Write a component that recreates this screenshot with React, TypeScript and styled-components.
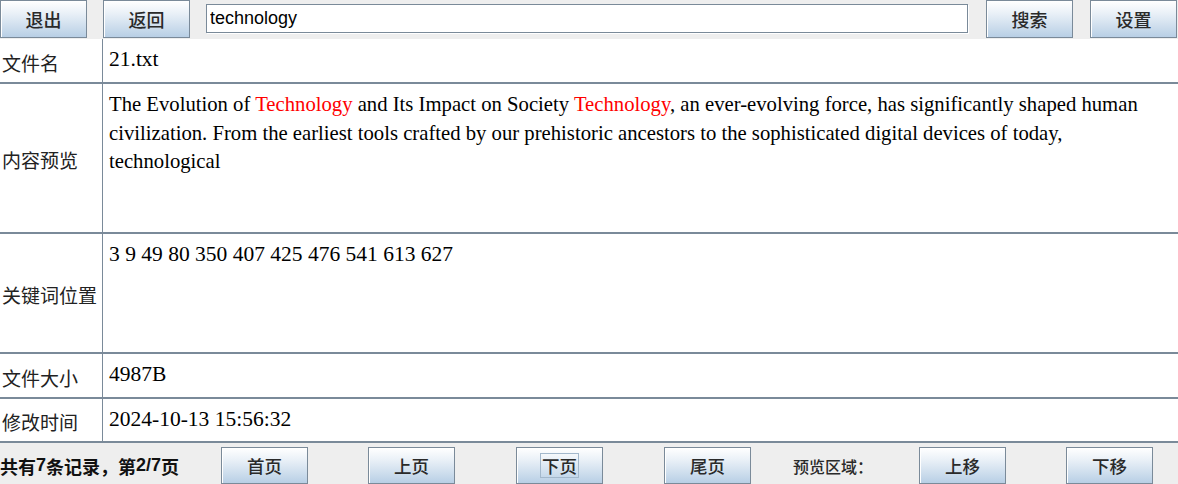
import styled, { createGlobalStyle } from 'styled-components';

const GlobalStyle = createGlobalStyle`
  html, body {
    margin: 0;
    padding: 0;
    background: #ffffff;
    overflow: hidden;
  }
`;

interface InfoRow {
  label: string;
  height: number;
  tight?: boolean;
  content: React.ReactNode;
}

const Hit = styled.span`
  color: #ff0000;
`;

const rows: InfoRow[] = [
  { label: '文件名', height: 45, content: '21.txt' },
  {
    label: '内容预览',
    height: 150,
    tight: true,
    content: (
      <>
        The Evolution of <Hit>Technology</Hit> and Its Impact on Society{' '}
        <Hit>Technology</Hit>, an ever-evolving force, has significantly shaped
        human civilization. From the earliest tools crafted by our prehistoric
        ancestors to the sophisticated digital devices of today, technological
      </>
    ),
  },
  {
    label: '关键词位置',
    height: 120,
    content: '3 9 49 80 350 407 425 476 541 613 627',
  },
  { label: '文件大小', height: 45, content: '4987B' },
  { label: '修改时间', height: 44, content: '2024-10-13 15:56:32' },
];

export default function App() {
  return (
    <>
      <GlobalStyle />
      <Window>
        <Toolbar>
          <ToolButton>退出</ToolButton>
          <ToolButton>返回</ToolButton>
          <SearchField defaultValue="technology" />
          <ToolButton $left={18}>搜索</ToolButton>
          <ToolButton $left={17}>设置</ToolButton>
        </Toolbar>
        <Table>
          {rows.map((row) => (
            <Row key={row.label} $height={row.height}>
              <Label>{row.label}</Label>
              <Value $tight={row.tight}>{row.content}</Value>
            </Row>
          ))}
        </Table>
        <StatusBar>
          <Status>
            共有<b>7</b>条记录，第<b>2/7</b>页
          </Status>
          <PageButton $left={39}>首页</PageButton>
          <PageButton $left={60}>上页</PageButton>
          <PageButton $left={61}>
            <Focus>下页</Focus>
          </PageButton>
          <PageButton $left={61}>尾页</PageButton>
          <AreaLabel>预览区域：</AreaLabel>
          <PageButton $left={45}>上移</PageButton>
          <PageButton $left={60}>下移</PageButton>
        </StatusBar>
      </Window>
    </>
  );
}

const Window = styled.div`
  width: 1178px;
  height: 484px;
  display: flex;
  flex-direction: column;
  background: #ffffff;
`;

const Toolbar = styled.div`
  height: 39px;
  display: flex;
  align-items: flex-start;
  gap: 16px;
  background: #eeeeee;
`;

const buttonFace = `
  box-sizing: border-box;
  width: 87px;
  padding: 0;
  border: 1px solid #7a8a99;
  box-shadow: inset 1px 1px 0 #ffffff;
  background: linear-gradient(to bottom, #ffffff 0%, #e9f0f7 35%, #b8cfe5 100%);
  font-family: 'Noto Sans CJK SC', sans-serif;
  font-weight: 500;
  color: #2a2a2a;
  display: flex;
  align-items: center;
  justify-content: center;
`;

const ToolButton = styled.button<{ $left?: number }>`
  ${buttonFace}
  height: 38px;
  margin-left: ${({ $left }) => ($left ? $left - 16 : 0)}px;
  font-size: 18px;
`;

const SearchField = styled.input`
  box-sizing: border-box;
  width: 762px;
  height: 29px;
  margin-top: 4px;
  padding: 0 3px;
  border: 1px solid #7a8a99;
  box-shadow: 1px 1px 0 #ffffff;
  outline: none;
  font-family: 'Liberation Sans', Arial, sans-serif;
  font-size: 18px;
  color: #000000;
`;

const Table = styled.div`
  display: flex;
  flex-direction: column;
`;

const Row = styled.div<{ $height: number }>`
  box-sizing: border-box;
  height: ${({ $height }) => $height}px;
  display: grid;
  grid-template-columns: 103px 1fr;
  border-bottom: 2px solid #7a8a99;
`;

const Label = styled.div`
  display: flex;
  align-items: center;
  padding: 3px 0 0 2px;
  border-right: 1px solid #7a8a99;
  font-family: 'Noto Sans CJK SC', sans-serif;
  font-size: 19px;
  color: #222222;
  white-space: nowrap;
`;

const Value = styled.div<{ $tight?: boolean }>`
  padding: 6px 30px 0 6px;
  font-family: 'Liberation Serif', 'Times New Roman', serif;
  font-size: ${({ $tight }) => ($tight ? '20.7px' : '21.5px')};
  line-height: 28.5px;
  color: #000000;
`;

const StatusBar = styled.div`
  flex: 1;
  display: flex;
  align-items: flex-start;
  padding-top: 4px;
  background: #eeeeee;
`;

const Status = styled.div`
  width: 182px;
  height: 37px;
  display: flex;
  align-items: center;
  font-family: 'Noto Sans CJK SC', sans-serif;
  font-size: 18px;
  font-weight: 700;
  color: #111111;
  white-space: nowrap;

  b {
    font-family: 'Liberation Sans', Arial, sans-serif;
  }
`;

const PageButton = styled.button<{ $left: number }>`
  ${buttonFace}
  height: 37px;
  margin-left: ${({ $left }) => $left}px;
  font-size: 17.5px;
`;

const Focus = styled.span`
  padding: 1px 1px 0;
  border: 1px solid #a3b8cc;
  line-height: 22px;
`;

const AreaLabel = styled.div`
  width: 81px;
  height: 37px;
  margin-left: 42px;
  display: flex;
  align-items: center;
  font-family: 'Noto Sans CJK SC', sans-serif;
  font-size: 16px;
  font-weight: 500;
  color: #2a2a2a;
  white-space: nowrap;
`;
